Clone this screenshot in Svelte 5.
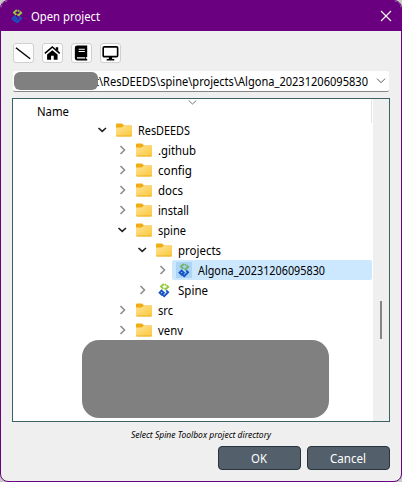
<script>
  const rows = [
    { name: 'ResDEEDS', level: 0, open: true, w: 52 },
    { name: '.github', level: 1, w: 38 },
    { name: 'config', level: 1, w: 34 },
    { name: 'docs', level: 1, w: 25 },
    { name: 'install', level: 1, w: 31 },
    { name: 'spine', level: 1, open: true, w: 28 },
    { name: 'projects', level: 2, open: true, w: 43 },
    { name: 'Algona_20231206095830', level: 3, spine: true, selected: true, w: 127 },
    { name: 'Spine', level: 2, spine: true, w: 30 },
    { name: 'src', level: 1, w: 15 },
    { name: 'venv', level: 1, w: 25 }
  ];
</script>

{#snippet label(text, width, size = 12, fill = '#000', style = 'normal')}
  <svg class="label" width={width + 2} height="20" viewBox="0 0 {width + 2} 20">
    <text x="0" y="14.5" textLength={width} lengthAdjust="spacingAndGlyphs" font-size={size} {fill} font-style={style}>{text}</text>
  </svg>
{/snippet}

{#snippet logo(green = '#95ca3e')}
  <svg class="logo" width="12" height="16" viewBox="0 0 12 16">
    <path d="M5.800 2 3 4.600 5.400 6.800M6.800 2.200l1.200 1M8.600 3.400 10.200 4.900 7.600 7.300 6.500 6.300" fill="none" stroke={green} stroke-width="1.900" />
    <path d="M3.600 8.600 5.900 10.700 3.800 12.600 1.600 10.600zM8.200 8.300l1.900 1.900-3.900 4-1.500-1.300" fill="none" stroke="#1554c4" stroke-width="1.900" />
  </svg>
{/snippet}

<div class="desktop">
  <div class="window">
    <header>
      {@render logo()}
      <div class="title">{@render label('Open project', 69, 12, '#fff')}</div>
      <svg class="close" width="12" height="12" viewBox="0 0 12 12"><path d="M1 1l10 10M11 1 1 11" stroke="#fff" stroke-width="1.1" /></svg>
    </header>
    <main>
      <div class="tools">
        <button aria-label="Root"><svg viewBox="0 0 20 18"><path d="M2 3.5 17 15" stroke="#000" stroke-width="1.5" /></svg></button>
        <button aria-label="Home"><svg viewBox="0 0 20 18"><path d="M2 9.5 9.8 2.7l7.8 6.8" fill="none" stroke="#000" stroke-width="1.7" /><path d="M13.5 3H16v4l-2.5-2zM4.3 10.700 9.8 6l5.5 4.700V16h-4v-4H8.5v4H4.3z" /></svg></button>
        <button aria-label="Documents"><svg viewBox="0 0 20 18"><path d="M5.5 1H16v12.2h-1v2h1V17H5.5Q3 17 3 14.5v-11Q3 1 5.500 1z" /><path d="M7 5h6.500M7 7.400h6.500M5.300 14.200H14" stroke="#fff" stroke-width="1.200" /></svg></button>
        <button aria-label="Desktop"><svg viewBox="0 0 20 18"><rect x="2.300" y="2.600" width="15.200" height="10.200" rx="1" fill="none" stroke="#000" stroke-width="1.700" /><path d="M8.500 13h3l.4 2.400H14V17H6v-1.600h2.100z" /></svg></button>
      </div>
      <div class="path">
        {@render label('t\\ResDEEDS\\spine\\projects\\Algona_20231206095830', 273)}
        <svg class="arrow" width="10" height="6" viewBox="0 0 10 6"><path d="M1 .7l4 4 4-4" fill="none" stroke="#555" /></svg>
        <div class="mask small"></div>
      </div>
      <div class="tree">
        <div class="content">
          <div class="head">
            {@render label('Name', 32)}
            <svg class="sort" width="9" height="5" viewBox="0 0 9 5"><path d="M.7.5l3.800 3.500L8.300.5" fill="none" stroke="#777" /></svg>
            <div class="divider"></div>
          </div>
          {#each rows as row}
            <div class="row l{row.level}">
              <svg class="twist" width="10" height="10" viewBox="0 0 10 10">
                {#if row.open}
                  <path d="M1.500 3l3.700 3.400L9 3" fill="none" stroke="#222" stroke-width="1.600" />
                {:else}
                  <path d="M3.500 1l4 4-4 4" fill="none" stroke="#8a8a8a" stroke-width="1.500" />
                {/if}
              </svg>
              <div class="item" class:selected={row.selected}>
                <div class="icon">
                  {#if row.spine}
                    {@render logo(row.selected ? '#70b36c' : '#95ca3e')}
                  {:else}
                    <svg width="16" height="14" viewBox="0 0 16 14">
                      <defs><linearGradient id="folder" x2="1" y2="1"><stop stop-color="#ffe394" /><stop offset="1" stop-color="#fbc83c" /></linearGradient></defs>
                      <path d="M0 1.500Q0 .5 1 .5h5l2 2h7q1 0 1 1V8H0z" fill="#f0ad12" />
                      <path d="M0 4.500h5.500L7.500 3H15q1 0 1 1v8.500q0 1-1 1H1q-1 0-1-1z" fill="url(#folder)" />
                      <path d="M.5 13h15" stroke="#eeb128" />
                    </svg>
                  {/if}
                </div>
                {@render label(row.name, row.w)}
              </div>
            </div>
          {/each}
          <div class="mask large"></div>
        </div>
        <div class="scroll"><div class="thumb"></div></div>
      </div>
      <div class="hint">{@render label('Select Spine Toolbox project directory', 140, 9, '#000', 'italic')}</div>
      <div class="actions">
        <button>{@render label('OK', 16, 12, '#fff')}</button>
        <button>{@render label('Cancel', 36, 12, '#fff')}</button>
      </div>
    </main>
  </div>
</div>

<style>
  * { box-sizing: border-box; }
  .desktop { width: 402px; height: 482px; background: #c9c9c9; font-family: "Noto Sans", "Open Sans", sans-serif; }
  .window { width: 402px; height: 482px; background: #efefef; border: 1px solid #6a007f; border-radius: 8px; overflow: hidden; }
  svg { display: block; flex: none; }
  .label { overflow: visible; }
  header { height: 30px; background: #6a007f; display: flex; align-items: center; padding: 0 9px 0 10px; }
  header .title { flex: 1; margin: -1px 0 0 8px; }
  main { padding: 12px 11px 0; display: flex; flex-direction: column; }
  .tools { display: flex; gap: 8px; padding-left: 1px; }
  .tools button { width: 21px; height: 20px; padding: 0; border: 1px solid #d0d0d0; border-radius: 3px; background: #fdfdfd; }
  .tools svg { width: 19px; height: 18px; }
  .path { position: relative; margin: 8px 0 0 1px; width: 376px; height: 21px; background: #fff; border-bottom: 1px solid #858585; display: flex; align-items: center; padding-left: 82px; border-radius: 2px; }
  .arrow { margin-left: 6px; }
  .mask { position: absolute; background: #808080; }
  .small { left: 1px; top: 1px; width: 84px; height: 18px; border-radius: 6px; }
  .tree { margin-top: 6px; width: 378px; height: 324px; border: 1px solid #3d6262; background: #fff; display: flex; }
  .content { position: relative; width: 360px; }
  .head { height: 21px; padding-left: 24px; padding-top: 2px; position: relative; }
  .sort { position: absolute; left: 175px; top: 1px; }
  .divider { position: absolute; right: 1px; top: 0; width: 1px; height: 24px; background: #e3e3e3; }
  .row { height: 20px; display: flex; align-items: center; }
  .l0 { padding-left: 84px; }
  .l1 { padding-left: 104px; }
  .l2 { padding-left: 124px; }
  .l3 { padding-left: 144px; }
  .item { flex: 1; height: 20px; display: flex; align-items: center; margin-left: 5px; margin-right: 1px; padding-left: 4px; border-radius: 2px; }
  .selected { background: #cce8ff; }
  .icon { width: 16px; height: 16px; display: grid; place-items: center; margin-right: 6px; }
  .selected .icon { background: #acd4f5; }
  .large { left: 69px; top: 241px; width: 247px; height: 78px; border-radius: 17px; }
  .scroll { width: 16px; background: #efefef; padding: 202px 0 0 7px; }
  .thumb { width: 2px; height: 38px; background: #858585; }
  .hint { padding: 1px 0 0 119px; height: 24px; }
  .actions { display: flex; justify-content: flex-end; gap: 6px; padding-right: 0; }
  .actions button { width: 83px; height: 24px; border: 1px solid #27343d; border-radius: 4px; background: #53606b; display: grid; place-items: center; padding: 0; font-family: inherit; }
</style>
